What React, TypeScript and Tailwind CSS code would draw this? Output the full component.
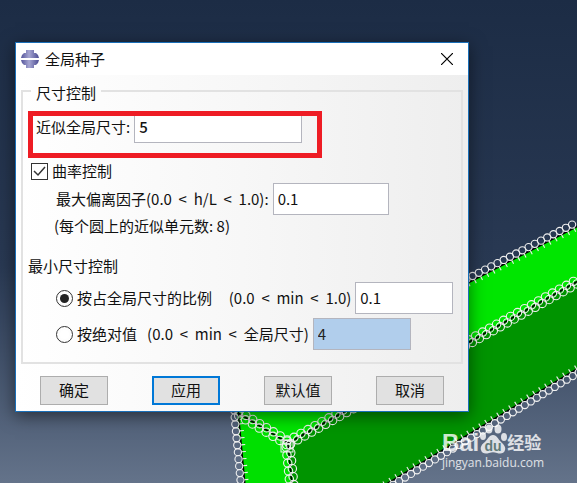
import { useState } from 'react';

type Point = [number, number];

const TEXT_INPUT =
    'h-8 min-w-0 border border-[#b4b5be] bg-white px-1 pb-0.5 text-[15px] text-[#111] outline-none';

interface SeedChainProps {
    from: Point;
    to: Point;
    step?: number;
    // which side of the edge gets circles, the other one gets ticks
    side?: 'left' | 'right' | 'both';
}

function SeedChain({ from, to, step = 8, side = 'both' }: SeedChainProps) {
    const dx = to[0] - from[0];
    const dy = to[1] - from[1];
    const length = Math.hypot(dx, dy);
    const ux = dx / length;
    const uy = dy / length;
    const count = Math.floor(length / step);
    const sign = side === 'right' ? -1 : 1;

    const seeds = Array.from({ length: count + 1 }, (_, i) => {
        const x = from[0] + ux * step * i;
        const y = from[1] + uy * step * i;
        return { x, y };
    });

    return (
        <g fill="none" stroke="#f0f0f0" strokeWidth="1.1">
            <line x1={from[0]} y1={from[1]} x2={to[0]} y2={to[1]} stroke="#000" strokeWidth="1.6" />
            {seeds.map(({ x, y }, i) => (
                <g key={i}>
                    {side === 'both' ? (
                        <>
                            <circle cx={x + uy * 2} cy={y - ux * 2} r="4.2" />
                            <circle cx={x + (ux * step) / 4 - uy * 2} cy={y + (uy * step) / 4 + ux * 2} r="4.2" />
                        </>
                    ) : (
                        <>
                            <circle cx={x + uy * 4 * sign} cy={y - ux * 4 * sign} r="3.6" />
                            <path d={`M${x} ${y}l${-uy * 4 * sign} ${ux * 4 * sign}`} />
                        </>
                    )}
                </g>
            ))}
        </g>
    );
}

function Viewport() {
    return (
        <svg
            className="absolute inset-0 h-full w-full"
            viewBox="0 0 577 483"
            preserveAspectRatio="xMaxYMax slice"
            aria-hidden="true"
        >
            <polygon points="234,404 288,443 577,282 577,227" fill="#00e600" />
            <polygon points="236,406 288,443 292,483 245,483" fill="#00e000" />
            <polygon points="288,443 577,282 577,369 389,483 292,483" fill="#009400" />
            <SeedChain from={[462, 286]} to={[580, 225]} step={7} side="left" />
            <SeedChain from={[288, 443]} to={[580, 280]} />
            <SeedChain from={[238, 413]} to={[288, 443]} />
            <SeedChain from={[288, 445]} to={[292, 486]} />
            <SeedChain from={[238, 410]} to={[245, 486]} step={7} side="right" />
            <SeedChain from={[385, 485]} to={[580, 367]} step={7} side="right" />
            <rect x="281" y="440" width="12" height="12" fill="none" stroke="#f0f0f0" />
        </svg>
    );
}

function AppIcon() {
    return (
        <svg className="h-[18px] w-[18px]" viewBox="0 0 18 18" aria-hidden="true">
            <defs>
                <linearGradient id="metal">
                    <stop offset="0" stopColor="#54549a" />
                    <stop offset="0.45" stopColor="#a6a6d2" />
                    <stop offset="1" stopColor="#4c4c92" />
                </linearGradient>
            </defs>
            <path d="M5 0h8v3h2l2 2 1 3H0l1-3 2-2h2zM0 10h18l-1 3-2 2h-2v3H5v-3H3l-2-2z" fill="url(#metal)" />
        </svg>
    );
}

function Watermark() {
    return (
        <div className="absolute right-[33px] bottom-3 font-['Open_Sans','Noto_Sans_CJK_SC',sans-serif] text-white/80">
            <div className="flex h-8 items-end">
                <span className="font-['Liberation_Sans',sans-serif] text-[24px] leading-6 font-bold">Bai</span>
                <svg className="h-8 w-7" viewBox="0 0 28 32" aria-hidden="true">
                    <g fill="#fff" fillOpacity="0.8">
                        <ellipse cx="4" cy="13" rx="3" ry="4" />
                        <ellipse cx="10" cy="6" rx="3.5" ry="4.5" />
                        <ellipse cx="19" cy="6" rx="3.5" ry="4.5" />
                        <ellipse cx="25" cy="14" rx="3" ry="4" />
                        <path d="M14 12c-4 0-5 4-8 7-3 2-5 5-4 8 1 4 5 4 8 3 3-1 5-1 8 0s7 1 8-3c1-3-1-5-4-8-3-3-4-7-8-7z" />
                    </g>
                    <text x="14" y="28" textAnchor="middle" fontSize="14" fontFamily="Liberation Sans" fontWeight="bold" fill="#5f7a78">
                        du
                    </text>
                </svg>
                <span className="text-[17px] leading-6 font-bold">经验</span>
            </div>
            <div className="text-[12px] leading-4">jingyan.baidu.com</div>
        </div>
    );
}

interface DialogButtonProps {
    label: string;
    isDefault?: boolean;
}

function DialogButton({ label, isDefault = false }: DialogButtonProps) {
    return (
        <button
            type="button"
            className={`h-[29px] w-[68px] bg-[#e1e1e1] pb-0.5 text-[15px] leading-none ${
                isDefault ? 'border-2 border-[#0078d7]' : 'border border-[#adadad]'
            }`}
        >
            {label}
        </button>
    );
}

export default function App() {
    const [globalSize, setGlobalSize] = useState('5');
    const [curvature, setCurvature] = useState(true);
    const [deviation, setDeviation] = useState('0.1');
    const [method, setMethod] = useState<'fraction' | 'absolute'>('fraction');
    const [fraction, setFraction] = useState('0.1');
    const [absolute, setAbsolute] = useState('4');

    const radioClass =
        'h-[17px] w-[17px] shrink-0 appearance-none rounded-full border border-[#333] bg-white bg-clip-content p-[3px] checked:bg-[#222]';

    return (
        <div className="relative min-h-screen overflow-hidden bg-linear-to-b from-[#1c2c45] via-[#293953] via-55% to-[#64738a] px-[15px] py-[42px] font-['Noto_Sans_CJK_SC',sans-serif] text-[15px] text-[#111]">
            <Viewport />
            <Watermark />

            <div
                role="dialog"
                aria-labelledby="dialog-title"
                className="relative max-w-[454px] border border-[#1a6fb8] bg-white shadow-[0_4px_16px_rgba(0,0,0,0.5)]"
            >
                <header className="flex h-8 items-center pr-[15px] pl-[5px]">
                    <AppIcon />
                    <h1 id="dialog-title" className="ml-1.5 flex-1">全局种子</h1>
                    <button type="button" aria-label="关闭">
                        <svg className="h-3 w-3" viewBox="0 0 12 12" aria-hidden="true">
                            <path d="M0 0l12 12M12 0L0 12" stroke="#000" strokeWidth="1.2" />
                        </svg>
                    </button>
                </header>

                <form className="bg-linear-to-r from-white via-[#f7f7f7] to-[#eeeeee] px-[5px] pt-1 pb-1.5">
                    <fieldset className="min-w-0 border-2 border-[#e2e2e2] pb-3">
                        <legend className="ml-2 h-6 px-[5px] leading-7">尺寸控制</legend>

                        <div className="relative mt-2 flex items-center pl-[13px]">
                            <label htmlFor="global-size" className="mr-1">近似全局尺寸:</label>
                            <input
                                id="global-size"
                                className={`${TEXT_INPUT} w-[168px] font-medium`}
                                value={globalSize}
                                onChange={(e) => setGlobalSize(e.target.value)}
                            />
                            <div className="pointer-events-none absolute top-0 left-[5px] h-[47px] w-[294px] border-5 border-[#ee1c24]" />
                        </div>

                        <div className="mt-4 flex h-6 items-center pl-2">
                            <span className="relative flex">
                                <input
                                    id="curvature"
                                    type="checkbox"
                                    className="h-[17px] w-[17px] appearance-none border border-[#333] bg-white"
                                    checked={curvature}
                                    onChange={(e) => setCurvature(e.target.checked)}
                                />
                                {curvature && (
                                    <svg className="pointer-events-none absolute inset-0" viewBox="0 0 17 17" aria-hidden="true">
                                        <path d="M3 8l4 4 7-8" fill="none" stroke="#333" strokeWidth="1.5" />
                                    </svg>
                                )}
                            </span>
                            <label htmlFor="curvature" className="ml-1">曲率控制</label>
                        </div>

                        <div className="flex items-center pl-[33px]">
                            <label htmlFor="deviation" className="mr-1 whitespace-pre">{'最大偏离因子(0.0  <  h/L  <  1.0):'}</label>
                            <input
                                id="deviation"
                                className={`${TEXT_INPUT} w-[116px]`}
                                value={deviation}
                                onChange={(e) => setDeviation(e.target.value)}
                            />
                        </div>
                        <p className="h-6 pl-[31px] leading-[22px]">(每个圆上的近似单元数: 8)</p>

                        <h2 className="mt-4 h-6 pl-[5px] leading-[22px]">最小尺寸控制</h2>

                        <div className="mt-[3px] flex flex-col gap-1 pl-[33px]">
                            <div className="flex items-center">
                                <input
                                    id="by-fraction"
                                    type="radio"
                                    name="method"
                                    className={radioClass}
                                    checked={method === 'fraction'}
                                    onChange={() => setMethod('fraction')}
                                />
                                <label htmlFor="by-fraction" className="mx-1 whitespace-pre">{'按占全局尺寸的比例     (0.0  <  min  <  1.0)'}</label>
                                <input
                                    aria-label="比例"
                                    className={`${TEXT_INPUT} w-[98px]`}
                                    value={fraction}
                                    onChange={(e) => setFraction(e.target.value)}
                                />
                            </div>
                            <div className="flex items-center">
                                <input
                                    id="by-absolute"
                                    type="radio"
                                    name="method"
                                    className={radioClass}
                                    checked={method === 'absolute'}
                                    onChange={() => setMethod('absolute')}
                                />
                                <label htmlFor="by-absolute" className="mx-1 whitespace-pre">{'按绝对值   (0.0  <  min  <  全局尺寸)'}</label>
                                <input
                                    aria-label="绝对值"
                                    className="h-8 w-[98px] min-w-0 border border-[#b4b5be] bg-[#b1ceec] px-1 pb-0.5 text-[15px] text-[#222] outline-none"
                                    value={absolute}
                                    onChange={(e) => setAbsolute(e.target.value)}
                                />
                            </div>
                        </div>
                    </fieldset>

                    <div className="mt-3 flex justify-between px-[19px]">
                        <DialogButton label="确定" />
                        <DialogButton label="应用" isDefault />
                        <DialogButton label="默认值" />
                        <DialogButton label="取消" />
                    </div>
                </form>
            </div>
        </div>
    );
}
